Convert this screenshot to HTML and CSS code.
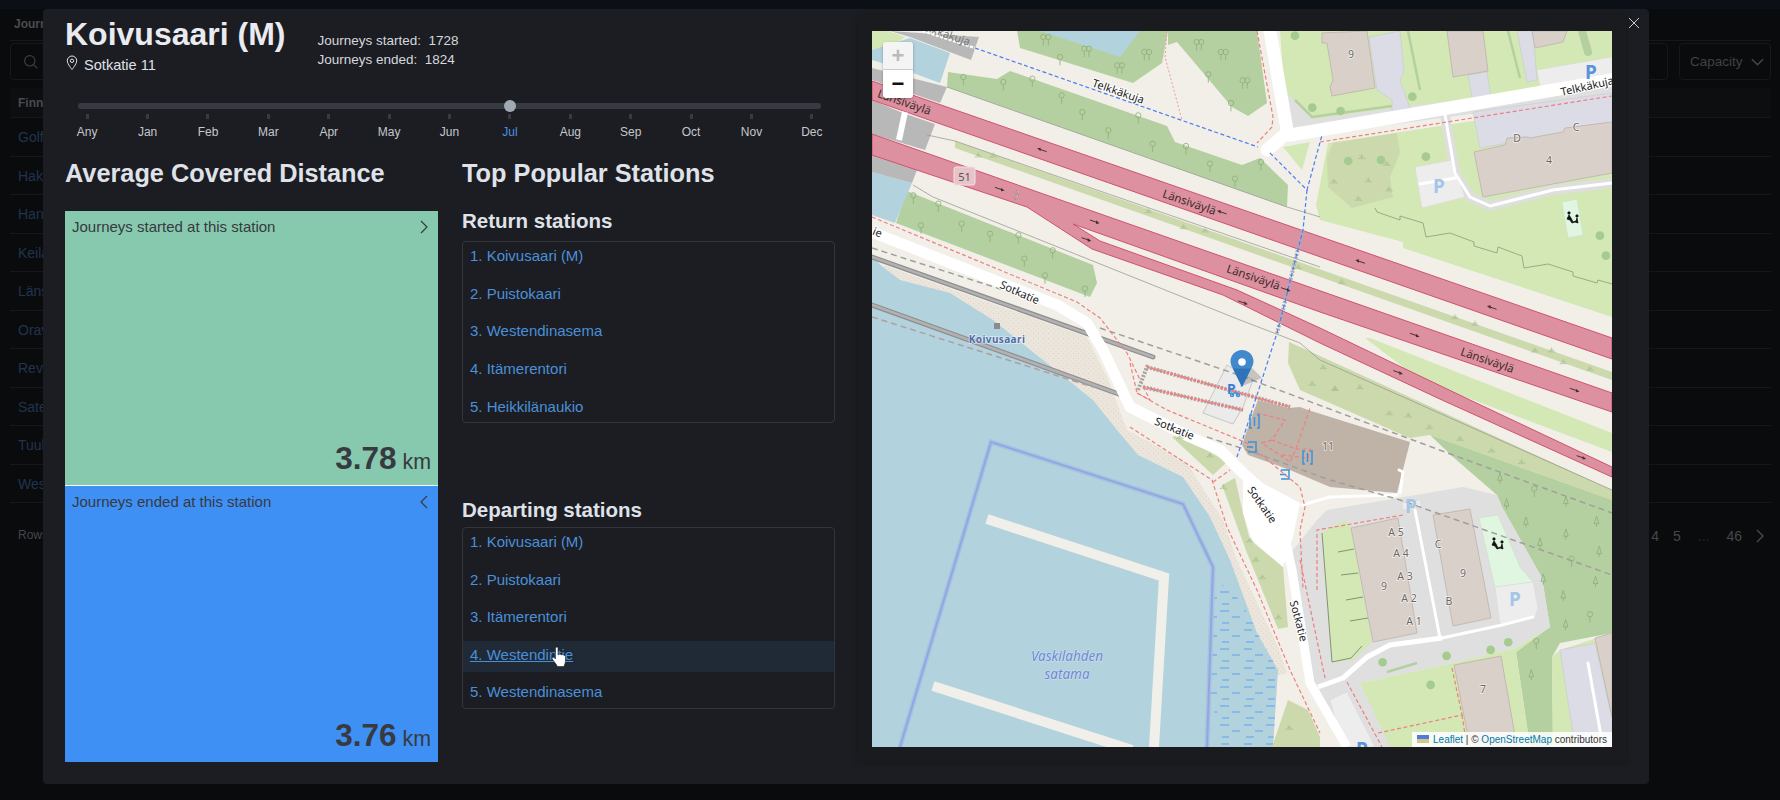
FILE: index.html
```html
<!DOCTYPE html>
<html lang="en">
<head>
  <meta charset="UTF-8">
  <title>Koivusaari (M)</title>
  <link rel="stylesheet" href="styles.css">
</head>
<body>

<div class="page">
  <div class="topbar"></div>
  <div class="page-title">Journeys</div>
  <div class="filters">
    <div class="search">
      <svg class="search-icon" viewBox="0 0 20 20"><circle cx="8.5" cy="8.5" r="6.5"/><path d="M13.5 13.5 18 18"/></svg>
    </div>
    <div class="select">Capacity
      <svg class="select-arrow" viewBox="0 0 14 8"><path d="M1 1l6 6 6-6"/></svg>
    </div>
  </div>
  <div class="table">
    <div class="row head">Finnish name</div>
    <div class="row link">Golfpolku</div>
    <div class="row link">Hakalehto</div>
    <div class="row link">Hanasaari</div>
    <div class="row link">Keilaranta</div>
    <div class="row link">Länsituuli</div>
    <div class="row link">Oravannahkatori</div>
    <div class="row link">Revontulentie</div>
    <div class="row link">Sateentie</div>
    <div class="row link">Tuulimäki</div>
    <div class="row link">Westendinasema</div>
  </div>
  <div class="pager">
    <span>Rows per page</span>
    <span class="pages"><span>4</span><span>5</span><span class="dots">...</span><span>46</span>
      <svg class="pager-next" viewBox="0 0 8 14"><path d="M1 1l6 6-6 6"/></svg>
    </span>
  </div>
</div>

<div class="modal">
  <button class="close" type="button" aria-label="Close">
    <svg viewBox="0 0 12 12"><path d="M1 1l10 10M11 1 1 11"/></svg>
  </button>

  <div class="info">
    <div class="head-row">
      <div>
        <h1>Koivusaari (M)</h1>
        <div class="address">
          <svg class="pin" viewBox="0 0 12 16"><path d="M6 1a4.7 4.7 0 0 0-4.7 4.8C1.3 9 6 14.5 6 14.5S10.7 9 10.7 5.8A4.7 4.7 0 0 0 6 1z"/><circle cx="6" cy="5.8" r="1.7"/></svg>
          Sotkatie 11
        </div>
      </div>
      <div class="counts">
        <div>Journeys started:&nbsp; 1728</div>
        <div>Journeys ended:&nbsp; 1824</div>
      </div>
    </div>

    <div class="slider">
      <div class="track"><div class="thumb"></div></div>
      <div class="marks">
        <span>Any</span><span>Jan</span><span>Feb</span><span>Mar</span><span>Apr</span><span>May</span><span>Jun</span>
        <span class="on">Jul</span><span>Aug</span><span>Sep</span><span>Oct</span><span>Nov</span><span>Dec</span>
      </div>
    </div>

    <div class="columns">
      <section class="col">
        <h2>Average Covered Distance</h2>
        <div class="treemap">
          <div class="cell green">
            <div class="cell-top">Journeys started at this station
              <svg class="chev" viewBox="0 0 8 14"><path d="M1 1l6 6-6 6"/></svg>
            </div>
            <div class="value"><b>3.78</b> km</div>
          </div>
          <div class="cell blue">
            <div class="cell-top">Journeys ended at this station
              <svg class="chev" viewBox="0 0 8 14"><path d="M7 1 1 7l6 6"/></svg>
            </div>
            <div class="value"><b>3.76</b> km</div>
          </div>
        </div>
      </section>

      <section class="col">
        <h2>Top Popular Stations</h2>
        <h3>Return stations</h3>
        <ul class="stations">
          <li><a>1. Koivusaari (M)</a></li>
          <li><a>2. Puistokaari</a></li>
          <li><a>3. Westendinasema</a></li>
          <li><a>4. Itämerentori</a></li>
          <li><a>5. Heikkilänaukio</a></li>
        </ul>
        <h3 class="second">Departing stations</h3>
        <ul class="stations tight">
          <li><a>1. Koivusaari (M)</a></li>
          <li><a>2. Puistokaari</a></li>
          <li><a>3. Itämerentori</a></li>
          <li class="hover"><a>4. Westendintie</a>
            <svg class="hand" viewBox="0 0 16 22"><path d="M5 1.5c.8-.8 2-.3 2 .8v6.500l1-.2c.2-.9 1.800-.9 2 .2l1 .1c.3-.7 1.700-.6 1.800.4l.7.2c.7 0 1 .8 1 1.500v4c0 2-1 3.500-1.500 5.500H6.500C5.500 18.500 3 15.500 1.300 13c-.7-1.300.8-2.300 1.700-1.500l1.500 1.500V2.500c0-.4.2-.8.5-1z"/></svg>
          </li>
          <li><a>5. Westendinasema</a></li>
        </ul>
      </section>
    </div>
  </div>

  <div class="map-card">
    <div class="map">
      <svg class="map-svg" viewBox="872 31 740 716">
        <defs>
          <g id="tree"><circle cy="-9" r="8"/><path d="M0-1V16"/></g>
          <g id="pine"><path d="M0-16-7 6H7zM0 6V16"/></g>
          <g id="tuft"><path d="M0-8V6M-9 6 0-2 9 6M-6-3 0 3 6-3M-11 6H11"/></g>
          <g id="arrow"><path d="M-15-5 8 3"/><path class="m-head" d="M14 5 3-4 3 7z"/></g>
          <pattern id="reeds" width="46" height="19" patternUnits="userSpaceOnUse">
            <path d="M2 3h8M24 3h9M13 9h8M36 9h8M4 15h8M26 15h7"/>
          </pattern>
          <pattern id="sand" width="5" height="5" patternUnits="userSpaceOnUse">
            <circle cx="1" cy="1" r=".45"/><circle cx="3.5" cy="3.5" r=".45"/>
          </pattern>
        </defs>

        <rect class="m-land" x="872" y="31" width="740" height="716"/>

        <!-- north side greens -->
        <polygon class="m-grass" points="872,31 888,31 905,37 872,60"/>
        <polygon class="m-grass" points="1280,31 1612,31 1612,85 1287,128"/>
        <polygon class="m-lot" points="1285,90 1312,119 1612,79 1612,95 1300,137 1284,130"/>
        <polygon class="m-grass" points="1328,143 1612,100 1612,317 1403,248 1403,242 1320,220 1316,205"/>
        <polygon class="m-grass" points="1283,147 1310,142 1302,170"/>
        <polygon class="m-scrub" points="1327,157 1333,143 1397,133 1400,153 1390,177 1393,197 1352,208 1328,187"/>
        <polygon class="m-forest" points="1017,31 1020,48 1133,83 1162,63 1168,31"/>
        <polygon class="m-forest" points="1168,45 1177,42 1232,107 1248,116 1267,103 1257,31 1168,31"/>
        <polygon class="m-water" points="1040,31 1120,57 1140,31"/>
        <polygon class="m-forest" points="948,72 997,79 1010,71 1167,126 1175,142 1242,165 1260,158 1288,185 1287,207 947,87"/>
        <polygon class="m-forest" points="907,191 1093,265 1097,283 1090,297 896,223"/>
        <polygon class="m-scrub" points="955,141 1612,372 1612,380 955,148"/>
        <polygon class="m-scrub" points="1289,342 1307,350 1612,490 1612,500 1430,435 1410,438 1300,390 1288,363"/>
        <polygon class="m-grass" points="1365,338 1370,338 1612,433 1612,452 1420,380"/>
        <polygon class="m-forest" points="1430,435 1612,500 1612,633 1560,643 1552,657 1553,747 1530,747 1516,652 1550,627 1542,578 1502,507 1497,495 1453,457"/>

        <!-- water, shore -->
        <polygon class="m-water" points="910,38 950,53 940,83 905,70 872,60 872,50"/>
        <polygon class="m-water" points="872,172 912,183 895,223 872,215"/>
        <polygon class="m-beach" points="883,265 1087,337 1107,377 1127,430 1187,463 1223,520 1237,560 1278,647 1287,673 1260,680 900,420"/>
        <polygon class="m-sand" points="883,265 1087,337 1107,377 1127,430 1187,463 1223,520 1237,560 1278,647 1287,673 1260,680 900,420"/>
        <polygon class="m-water" points="872,257 883,267 900,280 950,293 993,320 1043,360 1093,400 1117,430 1138,455 1183,477 1210,517 1230,560 1257,633 1278,670 1273,747 872,747"/>
        <polygon class="m-reeds" points="1217,580 1240,600 1278,670 1273,747 1222,747 1210,690 1212,600"/>
        <polyline class="m-pier" points="987,519 1164,577 1154,747"/>
        <polyline class="m-pier" points="933,686 1132,750"/>
        <polyline class="m-harbor-w" points="900,747 991,442 1183,504 1213,567 1207,747"/>
        <polyline class="m-harbor" points="900,747 991,442 1183,504 1213,567 1207,747"/>

        <!-- bridges -->
        <polygon class="m-gray" points="890,31 979,37 971,60 910,37"/>
        <polygon class="m-gray" points="872,68 947,87 940,103 872,80"/>
        <polygon class="m-gray" points="872,100 903,113 935,124 925,150 872,134"/>
        <polygon class="m-gray" points="872,155 917,170 912,183 872,172"/>
        <polyline class="m-deck" points="923,31 975,48"/>
        <text class="m-t-faint" transform="translate(943 37) rotate(19)">Telkkäkuja</text>

        <!-- motorway -->
        <polygon class="m-motorway" points="872,81 1612,338 1612,359 872,100"/>
        <polygon class="m-motorway" points="872,134 1612,393 1612,412 1320,312 1073,224 1100,241 1237,290 1320,328 1470,400 1612,467 1612,477 1442,400 1320,343 1223,295 1092,249 1027,207 872,155"/>
        <polyline class="m-bridge" points="905,112 899,140"/>
        <rect class="m-shield" x="954" y="167" width="21" height="18" rx="2"/>
        <text class="m-t-shield" x="964.5" y="181">51</text>
        <text class="m-t-ref" x="1016" y="199">3</text>

        <!-- thin walls -->
        <polyline class="m-wall" points="947,87 1287,207 1307,213 1320,217"/>
        <polyline class="m-wall" points="927,135 955,141 1320,267"/>
        <polyline class="m-wall" points="913,185 933,197 1240,320 1300,343 1320,360 1612,490"/>
        <polyline class="m-fence" points="1375,208 1377,212 1400,220 1400,216 1423,223 1426,237 1450,233 1474,242 1474,246 1497,253 1498,247 1522,256 1524,268 1548,264 1573,272 1573,276 1597,283 1598,280 1612,284"/>

        <!-- railway -->
        <polyline class="m-rail-b" points="872,257 1153,357"/>
        <polyline class="m-rail" points="872,257 1153,357"/>
        <polyline class="m-rail-b" points="872,305 1127,397"/>
        <polyline class="m-rail" points="872,305 1127,397"/>
        <polyline class="m-tunnel" points="872,248 1060,308"/>
        <polyline class="m-tunnel-r" points="872,317 1093,387"/>

        <!-- north buildings -->
        <polygon class="m-purple" points="1369,37 1400,31 1404,72 1400,80 1410,108 1392,112 1392,100 1377,90 1375,77"/>
        <polygon class="m-purple" points="1468,75 1487,72 1491,98 1473,102"/>
        <polygon class="m-purple" points="1517,31 1533,31 1537,80 1527,82"/>
        <polygon class="m-purple" points="1473,112 1612,93 1612,125 1480,148"/>
        <polygon class="m-building" points="1322,33 1367,31 1375,88 1332,96 1330,87 1333,80 1327,43 1322,43"/>
        <polygon class="m-building" points="1447,31 1483,31 1488,71 1453,77"/>
        <polygon class="m-building" points="1532,31 1567,31 1563,42 1535,48"/>
        <polygon class="m-parking" points="1537,70 1612,57 1612,78 1540,87"/>
        <polygon class="m-building" points="1474,152 1505,145 1507,138 1528,137 1530,138 1563,132 1565,128 1588,125 1612,122 1612,173 1483,197"/>
        <path class="m-strip" d="M1408 31 1420 90M1508 31 1520 78"/>
        <path class="m-strip-w" d="M1582 31 1588 52"/>
        <path class="m-strip" d="M1295 100 1312 117 1392 106"/>

        <!-- south lot north of motorway -->
        <polyline class="m-road-casing" points="1445,115 1455,173 1470,197 1490,206 1553,190 1612,183"/>
        <polygon class="m-parking" points="1415,167 1452,160 1465,197 1422,208"/>
        <polyline class="m-road-s" points="1445,115 1455,173 1470,197 1490,206 1553,190 1612,183"/>
        <polyline class="m-road-s" points="1420,184 1455,178"/>
        <polygon class="m-play" points="1562,202 1577,199 1583,235 1568,238"/>

        <!-- south east quarter -->
        <polygon class="m-lot" points="1317,520 1327,510 1463,487 1497,495 1502,507 1542,578 1550,627 1516,648 1453,663 1360,683 1392,747 1353,747 1310,690 1296,600 1293,550"/>
        <polygon class="m-grass" points="1322,533 1345,520 1352,530 1372,642 1353,660 1332,662"/>
        <polygon class="m-grass" points="1360,683 1453,663 1516,648 1550,627 1516,652 1530,747 1390,747"/>
        <polygon class="m-grass" points="1560,650 1612,633 1612,747 1553,747 1552,657"/>
        <polygon class="m-purple" points="1560,650 1595,643 1612,717 1612,747 1575,747"/>
        <polygon class="m-building" points="1595,638 1612,633 1612,717"/>
        <polygon class="m-building" points="1351,528 1398,518 1417,633 1373,642"/>
        <polygon class="m-building" points="1433,515 1470,509 1491,618 1453,626"/>
        <polygon class="m-building" points="1454,665 1501,656 1517,747 1470,747"/>
        <polygon class="m-play" points="1479,518 1498,515 1520,567 1533,582 1495,587"/>
        <polygon class="m-parking" points="1495,587 1533,582 1538,608 1535,617 1500,624"/>
        <polygon class="m-parking" points="1330,700 1347,692 1375,747 1343,747"/>
        <polygon class="m-scrub" points="1288,700 1308,710 1320,737 1320,747 1272,747"/>
        <polyline class="m-thin" points="1322,533 1332,662 1351,658 1362,646"/>
        <path class="m-thin" d="M1338 552 1354 549M1341 575 1358 573M1346 600 1363 597M1350 621 1368 618"/>
        <path class="m-strip" d="M1387 672 1417 663M1432 740 1434 747"/>
        <polygon class="m-scrub" points="1172,437 1180,435 1227,462 1213,475"/>
        <polygon class="m-scrub" points="1222,485 1235,478 1243,513 1250,540 1283,567 1288,627 1278,629 1247,553"/>

        <!-- roads -->
        <polygon class="m-white" points="1243,473 1270,487 1300,503 1293,537 1283,567 1252,540 1243,513"/>
        <polyline class="m-road" points="872,232 1057,305 1087,323 1103,350 1130,407 1190,437 1220,450 1243,473 1277,503"/>
        <polyline class="m-road-m" points="1283,530 1292,570 1310,683 1347,747"/>
        <polyline class="m-road-big" points="1270,31 1287,130"/>
        <polyline class="m-road-big" points="1290,135 1320,130 1612,80"/>
        <polyline class="m-road-big" points="1287,133 1267,150"/>
        <polyline class="m-road-s" points="1302,505 1330,497 1397,495"/>
        <polyline class="m-road-t" points="1318,687 1343,678 1367,657 1390,645 1442,638"/>
        <polyline class="m-road-s" points="1442,638 1502,625 1533,617"/>
        <polyline class="m-road-s" points="1415,510 1440,638"/>
        <polyline class="m-road-s" points="1588,663 1603,747"/>
        <polygon class="m-parking" points="1402,503 1420,500 1421,506 1403,510"/>

        <!-- dark building -->
        <polygon class="m-parking-e" points="1227,365 1253,380 1243,407 1233,424 1203,413"/>
        <polygon class="m-dark" points="1258,400 1288,408 1300,407 1308,410 1410,442 1397,493 1330,487 1290,470 1248,455 1242,445 1253,413"/>
        <polyline class="m-road-s" points="1400,493 1403,472 1399,470"/>
        <polyline class="m-tunnel" points="1100,328 1233,373 1453,455 1612,513"/>
        <polyline class="m-tunnel" points="1207,437 1247,450 1330,480 1400,500 1612,575"/>

        <!-- footways -->
        <polyline class="m-foot" points="872,217 1077,302 1100,318 1127,353 1150,400 1137,393"/>
        <polyline class="m-dotred" points="1167,31 1165,57 1182,120"/>
        <polyline class="m-foot" points="1257,31 1273,117 1272,127 1257,143"/>
        <polyline class="m-foot" points="1320,142 1612,96"/>
        <polyline class="m-foot-g" points="1138,390 1147,367 1290,407"/>
        <polyline class="m-foot-g" points="1143,387 1243,410"/>
        <polyline class="m-foot-t" points="1147,367 1290,407"/>
        <polyline class="m-foot-t" points="1143,387 1243,410"/>
        <polyline class="m-foot" points="1130,427 1212,480 1227,527 1257,590 1290,670 1320,733"/>
        <polyline class="m-foot" points="1130,363 1137,393 1167,410 1247,443 1300,487 1305,507 1300,530 1303,590"/>
        <polyline class="m-foot" points="1213,482 1230,470"/>
        <polyline class="m-foot" points="1300,560 1325,678"/>
        <polyline class="m-foot" points="1317,590 1317,530 1403,515"/>
        <polyline class="m-foot" points="1347,682 1382,747"/>
        <polyline class="m-foot" points="1378,733 1462,715 1452,668"/>
        <polyline class="m-foot" points="1462,715 1467,747"/>
        <polyline class="m-foot" points="1257,413 1285,420 1272,440 1296,449 1310,408"/>
        <polyline class="m-foot" points="1272,440 1262,443 1290,462 1296,449 1310,449 1308,458 1282,455"/>

        <!-- cycleways -->
        <polyline class="m-ladder" points="1303,230 1297,253 1283,310 1277,333"/>
        <polyline class="m-cycle" points="975,48 1258,147"/>
        <polyline class="m-cycle" points="1270,153 1307,190 1322,135"/>
        <polyline class="m-cycle" points="1307,190 1303,230 1297,253 1283,310 1277,333 1237,457"/>

        <!-- small marks, in thirds of a pixel -->
        <g transform="translate(860 0) scale(.3333)">
          <g class="m-trees">
            <use href="#tree" x="310" y="240"/><use href="#tree" x="430" y="255"/><use href="#tree" x="517" y="245"/><use href="#tree" x="605" y="295"/>
            <use href="#tree" x="667" y="345"/><use href="#tree" x="745" y="400"/><use href="#tree" x="835" y="355"/><use href="#tree" x="978" y="447"/>
            <use href="#tree" x="878" y="440"/><use href="#tree" x="1050" y="500"/><use href="#tree" x="1125" y="545"/><use href="#tree" x="1203" y="495"/>
            <use href="#tree" x="160" y="595"/><use href="#tree" x="235" y="620"/><use href="#tree" x="305" y="680"/><use href="#tree" x="390" y="710"/>
            <use href="#tree" x="475" y="715"/><use href="#tree" x="493" y="785"/><use href="#tree" x="578" y="760"/><use href="#tree" x="675" y="875"/>
            <use href="#tree" x="183" y="685"/><use href="#tree" x="555" y="835"/>
            <use href="#tree" x="550" y="120"/><use href="#tree" x="565" y="120"/><use href="#tree" x="673" y="155"/><use href="#tree" x="687" y="155"/>
            <use href="#tree" x="600" y="180"/><use href="#tree" x="772" y="205"/><use href="#tree" x="786" y="205"/><use href="#tree" x="853" y="165"/><use href="#tree" x="867" y="165"/>
            <use href="#tree" x="1010" y="135"/><use href="#tree" x="1024" y="135"/><use href="#tree" x="1083" y="165"/><use href="#tree" x="1097" y="165"/>
            <use href="#tree" x="1148" y="250"/><use href="#tree" x="1162" y="250"/><use href="#tree" x="1045" y="232"/><use href="#tree" x="1113" y="318"/>
            <use href="#pine" x="1920" y="1435"/><use href="#tree" x="2023" y="1475"/><use href="#pine" x="1940" y="1512"/><use href="#pine" x="2118" y="1505"/>
            <use href="#pine" x="1998" y="1567"/><use href="#pine" x="2210" y="1565"/><use href="#pine" x="2118" y="1603"/><use href="#pine" x="2040" y="1630"/>
            <use href="#tree" x="2135" y="1685"/><use href="#pine" x="2218" y="1655"/><use href="#pine" x="2050" y="1738"/><use href="#pine" x="2207" y="1745"/>
            <use href="#pine" x="2110" y="1788"/><use href="#tree" x="2190" y="1852"/><use href="#pine" x="2117" y="1875"/><use href="#tree" x="2029" y="1932"/><use href="#pine" x="2014" y="2025"/>
          </g>
          <g class="m-tufts">
            <use href="#tuft" x="1505" y="470"/><use href="#tuft" x="1580" y="490"/><use href="#tuft" x="1422" y="543"/><use href="#tuft" x="1525" y="540"/><use href="#tuft" x="1587" y="567"/><use href="#tuft" x="1495" y="595"/>
            <use href="#tuft" x="1588" y="1238"/><use href="#tuft" x="1645" y="1245"/><use href="#tuft" x="1708" y="1280"/><use href="#tuft" x="1800" y="1315"/><use href="#tuft" x="1895" y="1350"/><use href="#tuft" x="1985" y="1385"/>
            <use href="#tuft" x="1357" y="1150"/><use href="#tuft" x="1425" y="1165"/><use href="#tuft" x="1500" y="1160"/>
            <use href="#tuft" x="960" y="1310"/><use href="#tuft" x="1050" y="1365"/><use href="#tuft" x="1090" y="1460"/><use href="#tuft" x="1170" y="1620"/><use href="#tuft" x="1188" y="1678"/><use href="#tuft" x="1207" y="1730"/><use href="#tuft" x="1255" y="1850"/><use href="#tuft" x="1288" y="2182"/>
            <use href="#tuft" x="355" y="465"/><use href="#tuft" x="400" y="465"/><use href="#tuft" x="865" y="632"/><use href="#tuft" x="970" y="680"/><use href="#tuft" x="1035" y="690"/><use href="#tuft" x="1315" y="800"/>
            <use href="#tuft" x="1445" y="845"/><use href="#tuft" x="1785" y="950"/><use href="#tuft" x="1845" y="970"/><use href="#tuft" x="2025" y="1050"/><use href="#tuft" x="2075" y="1050"/><use href="#tuft" x="2110" y="1085"/><use href="#tuft" x="2190" y="1105"/>
            <use href="#tuft" x="1390" y="1100"/><use href="#tuft" x="1425" y="1165"/>
          </g>
          <g class="m-dots">
            <circle cx="1305" cy="107" r="13"/><circle cx="1357" cy="323" r="13"/><circle cx="1442" cy="333" r="13"/><circle cx="1657" cy="290" r="13"/>
            <circle cx="1698" cy="470" r="13"/><circle cx="1465" cy="483" r="13"/><circle cx="1563" cy="480" r="13"/><circle cx="2220" cy="707" r="13"/><circle cx="2238" cy="767" r="13"/>
            <circle cx="1568" cy="1987" r="13"/><circle cx="1760" cy="1968" r="13"/><circle cx="1892" cy="1950" r="13"/><circle cx="1945" cy="1927" r="13"/><circle cx="1712" cy="2055" r="13"/>
          </g>
          <g class="m-arrows">
            <use href="#arrow" transform="translate(545 450) rotate(180)"/><use href="#arrow" transform="translate(1085 637) rotate(180)"/>
            <use href="#arrow" transform="translate(1500 785) rotate(180)"/><use href="#arrow" transform="translate(1895 923) rotate(180)"/>
            <use href="#arrow" x="420" y="567"/><use href="#arrow" x="705" y="665"/><use href="#arrow" x="680" y="718"/>
            <use href="#arrow" x="1278" y="868"/><use href="#arrow" x="1150" y="908"/><use href="#arrow" x="1665" y="1005"/>
            <use href="#arrow" x="1615" y="1117"/><use href="#arrow" x="2145" y="1170"/><use href="#arrow" x="2165" y="1372"/>
          </g>
        </g>

        <!-- poi icons -->
        <g class="m-poi">
          <path d="M1252 415h-2v13h2M1257 415h2v13h-2M1254.5 417v9"/>
          <path d="M1305 451h-2v13h2M1310 451h2v13h-2M1307.5 453v9"/>
          <path d="M1248 442h8v10h-8M1247 447h6"/>
          <path d="M1281 470h8v9h-8M1280 474.5h6"/>
        </g>
        <text class="m-t-poi" x="1227" y="394">P</text>
        <g class="m-poi"><circle cx="1232" cy="395" r="1.5"/><circle cx="1238" cy="395" r="1.5"/><path d="M1232 395l3-3 3 3"/></g>

        <!-- playground figures -->
        <g class="m-fig">
          <circle cx="1569" cy="213" r="1.2"/><circle cx="1577" cy="216" r="1.2"/><path d="M1567 219l2-4 2 3 2 4 3-1 1-3 1 5-3-1-3 1-2-3z"/>
          <circle cx="1494" cy="539" r="1.2"/><circle cx="1502" cy="542" r="1.2"/><path d="M1492 545l2-4 2 3 2 4 3-1 1-3 1 5-3-1-3 1-2-3z"/>
        </g>

        <!-- labels -->
        <text class="m-t-road" transform="translate(903 106) rotate(19)">Länsiväylä</text>
        <text class="m-t-road" transform="translate(1188 206) rotate(19)">Länsiväylä</text>
        <text class="m-t-road" transform="translate(1252 281) rotate(19)">Länsiväylä</text>
        <text class="m-t-road" transform="translate(1486 364) rotate(19)">Länsiväylä</text>
        <text class="m-t-way" transform="translate(1117 95) rotate(19)">Telkkäkuja</text>
        <text class="m-t-way" transform="translate(1588 90) rotate(-13)">Telkkäkuja</text>
        <text class="m-t-way" transform="translate(1018 296) rotate(24)">Sotkatie</text>
        <text class="m-t-way" transform="translate(1173 432) rotate(22)">Sotkatie</text>
        <text class="m-t-way" transform="translate(1259 507) rotate(55)">Sotkatie</text>
        <text class="m-t-way" transform="translate(1295 622) rotate(75)">Sotkatie</text>
        <text class="m-t-way" transform="translate(876 236) rotate(22)">ie</text>
        <rect class="m-stop" x="994" y="323" width="6" height="6"/>
        <text class="m-t-stop" x="997" y="343">Koivusaari</text>
        <text class="m-t-bay" x="1067" y="661">Vaskilahden</text>
        <text class="m-t-bay" x="1067" y="679">satama</text>
        <text class="m-t-num" x="1351" y="58">9</text>
        <text class="m-t-num" x="1549" y="164">4</text>
        <text class="m-t-num" x="1517" y="142">D</text>
        <text class="m-t-num" x="1576" y="131">C</text>
        <text class="m-t-num" x="1328" y="450">11</text>
        <text class="m-t-num" x="1396" y="536">A 5</text>
        <text class="m-t-num" x="1401" y="557">A 4</text>
        <text class="m-t-num" x="1405" y="580">A 3</text>
        <text class="m-t-num" x="1409" y="602">A 2</text>
        <text class="m-t-num" x="1414" y="625">A 1</text>
        <text class="m-t-num" x="1384" y="590">9</text>
        <text class="m-t-num" x="1438" y="548">C</text>
        <text class="m-t-num" x="1463" y="577">9</text>
        <text class="m-t-num" x="1449" y="605">B</text>
        <text class="m-t-num" x="1483" y="693">7</text>
        <text class="m-t-p strong" x="1591" y="79">P</text>
        <text class="m-t-p" x="1439" y="193">P</text>
        <text class="m-t-p" x="1515" y="606">P</text>
        <text class="m-t-p" x="1411" y="513">P</text>
        <text class="m-t-p strong" x="1362" y="756">P</text>

        <!-- marker -->
        <polygon class="m-marker-shadow" points="1240,387 1248,364 1262,378"/>
        <path class="m-marker" d="M1242 350c-6.400 0-11.500 5-11.500 11.300 0 2.500 1 5 2.300 7.300l9.200 18.400 9.200-18.400c1.300-2.300 2.300-4.800 2.300-7.300 0-6.300-5.100-11.300-11.500-11.300z"/>
        <path class="m-marker-low" d="M1233 368.400h18l-9 18.600z"/>
        <circle class="m-marker-eye" cx="1242" cy="362" r="3.800"/>
      </svg>

      <div class="zoom-ctl">
        <span class="zoom-btn off">+</span>
        <span class="zoom-btn">−</span>
      </div>
      <div class="attrib">
        <svg class="flag" viewBox="0 0 12 8"><rect width="12" height="4" fill="#4C7BE1"/><rect y="4" width="12" height="4" fill="#D4C785"/></svg>
        <a>Leaflet</a> | © <a>OpenStreetMap</a> contributors
      </div>
    </div>
  </div>
</div>

</body>
</html>
```

FILE: styles.css
```css
* {
  box-sizing: border-box;
}
html, body {
  margin: 0;
  height: 100%;
}
body {
  width: 1780px;
  height: 800px;
  overflow: hidden;
  background: #060607;
  font-family: "Liberation Sans", Arial, sans-serif;
  position: relative;
}

/* dimmed page behind the modal */
.page {
  height: 800px;
  padding: 9px 9px 0 10px;
  background: #0a0b0d;
}
.topbar {
  position: absolute;
  left: 0;
  top: 0;
  width: 100%;
  height: 9px;
  background: #0c1016;
}
.page-title {
  height: 32px;
  padding: 8px 0 0 4px;
  font-size: 12px;
  font-weight: 700;
  color: #4a4c52;
  border-bottom: 1px solid #17181b;
}
.filters {
  display: flex;
  justify-content: space-between;
  margin-top: 2px;
  height: 37px;
}
.search {
  width: 1658px;
  border: 1px solid #17181b;
  border-radius: 4px;
  padding: 10px 0 0 12px;
}
.search-icon {
  width: 16px;
  height: 16px;
  fill: none;
  stroke: #3c3e44;
  stroke-width: 1.5;
}
.select {
  width: 92px;
  border: 1px solid #17181b;
  border-radius: 4px;
  padding: 10px 0 0 10px;
  font-size: 13.5px;
  color: #3f4248;
  position: relative;
}
.select-arrow {
  position: absolute;
  right: 6px;
  top: 14px;
  width: 13px;
  height: 8px;
  fill: none;
  stroke: #45484e;
  stroke-width: 1.5;
}
.table {
  margin-top: 8px;
}
.row {
  height: 38.5px;
  padding: 11px 0 0 8px;
  font-size: 14px;
  border-bottom: 1px solid #16171a;
}
.row.head {
  height: 30px;
  padding-top: 8px;
  font-size: 12px;
  font-weight: 700;
  color: #484a50;
  background: #0d0e10;
}
.row.link {
  color: #20344e;
}
.pager {
  display: flex;
  justify-content: space-between;
  margin-top: 25px;
  padding-left: 8px;
  font-size: 12px;
  color: #44464c;
}
.pages {
  display: flex;
  gap: 14px;
  align-items: center;
  font-size: 14px;
  color: #45474d;
  padding-right: 7px;
}
.dots {
  margin: 0 3px;
  color: #26272b;
}
.pager-next {
  width: 8px;
  height: 14px;
  fill: none;
  stroke: #4a4c52;
  stroke-width: 1.3;
}

/* modal */
.modal {
  position: absolute;
  left: 43px;
  top: 9px;
  width: 1606px;
  height: 775px;
  padding: 6px 23px 0 22px;
  display: flex;
  background: #1c1d22;
  border-radius: 4px;
  color: #dee2e8;
}
.close {
  position: absolute;
  right: 9px;
  top: 8px;
  width: 12px;
  height: 12px;
  padding: 0;
  border: 0;
  background: none;
}
.close svg {
  display: block;
  stroke: #c9ccd2;
  stroke-width: 1;
}

.info {
  width: 770px;
  flex: none;
}
.head-row {
  display: flex;
  gap: 32px;
}
h1 {
  margin: 0;
  font-size: 32px;
  line-height: 38px;
  font-weight: 700;
  color: #e9ebf0;
}
.address {
  display: flex;
  align-items: center;
  gap: 6px;
  margin-top: 3px;
  font-size: 14.6px;
  line-height: 18px;
}
.pin {
  width: 12px;
  height: 16px;
  fill: none;
  stroke: #dee2e8;
  stroke-width: 1;
  margin: -4px 0 0 1px;
}
.counts {
  padding-top: 17px;
  font-size: 13.5px;
  line-height: 18.5px;
  color: #d5d8de;
}

.slider {
  margin: 29px 0 0 13px;
  width: 743px;
}
.track {
  height: 6px;
  background: #373a42;
  border-radius: 3px;
  position: relative;
}
.thumb {
  position: absolute;
  left: 58.1%;
  top: -3px;
  width: 12px;
  height: 12px;
  margin-left: -6px;
  border-radius: 50%;
  background: #a0aab2;
}
.marks {
  display: grid;
  grid-template-columns: repeat(13, 60.4px);
  margin: 5px 0 0 -21px;
  font-size: 12px;
  text-align: center;
  color: #c4c7cd;
}
.marks span::before {
  content: "";
  display: block;
  width: 3px;
  height: 5px;
  margin: 0 auto 6px;
  background: #373a42;
}
.marks .on {
  color: #4a90e2;
}

.columns {
  display: flex;
  gap: 24px;
  margin-top: 18.7px;
}
.col {
  width: 373px;
}
h2 {
  margin: 0;
  font-size: 25.3px;
  line-height: 30px;
  font-weight: 700;
  color: #dfe2e8;
}
h3 {
  margin: 21.5px 0 0;
  font-size: 20.5px;
  line-height: 23px;
  font-weight: 700;
  color: #dfe2e8;
}
h3.second {
  margin-top: 74.5px;
}

.treemap {
  margin-top: 23px;
  height: 551px;
  display: flex;
  flex-direction: column;
}
.cell {
  padding: 7.5px 7px 4px 7px;
  display: flex;
  flex-direction: column;
  justify-content: space-between;
  color: #373a40;
  font-size: 15px;
}
.cell.green {
  height: 275px;
  background: #86c9ae;
  border-bottom: 1.5px solid #f4f8f6;
}
.cell.blue {
  height: 276px;
  background: #3f90f5;
}
.cell-top {
  display: flex;
  justify-content: space-between;
  align-items: center;
  padding-right: 3px;
}
.chev {
  width: 8px;
  height: 14px;
  fill: none;
  stroke: #373a40;
  stroke-width: 1.2;
}
.value {
  text-align: right;
  font-size: 21.4px;
  line-height: 38px;
}
.value b {
  font-size: 31.5px;
}

.stations {
  list-style: none;
  margin: 9px 0 0;
  padding: 0;
  height: 182px;
  border: 1px solid #33353b;
  border-radius: 4px;
  overflow: hidden;
}
.stations.tight {
  margin-top: 6.4px;
}
.stations li {
  height: 31px;
  margin-bottom: 6.6px;
  padding: 0 7px;
  font-size: 15px;
  line-height: 28px;
  color: #4a90d9;
  position: relative;
}
.stations .hover {
  background: #1f2a36;
}
.stations .hover a {
  text-decoration: underline;
}
.hand {
  position: absolute;
  left: 88px;
  top: 5px;
  width: 16px;
  height: 22px;
  fill: #fff;
  stroke: #222;
  stroke-width: .6;
}

/* map */
.map-card {
  width: 769px;
  height: 747px;
  margin-left: 22px;
  padding: 16px 14px 15px 15px;
  background: #1a1b1f;
  border-radius: 4px;
  box-shadow: 0 1px 6px rgba(0, 0, 0, .25);
}
.map {
  width: 740px;
  height: 716px;
  position: relative;
  overflow: hidden;
}
.map-svg {
  display: block;
  width: 740px;
  height: 716px;
}
.zoom-ctl {
  position: absolute;
  left: 11px;
  top: 11px;
  width: 30px;
  display: flex;
  flex-direction: column;
  border-radius: 3px;
  overflow: hidden;
  box-shadow: 0 1px 3px rgba(0, 0, 0, .3);
}
.zoom-btn {
  height: 28px;
  background: #fff;
  color: #111;
  font-size: 22px;
  font-weight: 700;
  line-height: 28px;
  text-align: center;
}
.zoom-btn.off {
  background: #f4f4f4;
  color: #bbb;
  border-bottom: 1px solid #ccc;
}
.attrib {
  position: absolute;
  right: 0;
  bottom: 0;
  height: 15px;
  padding: 0 5px;
  font-size: 10px;
  line-height: 15px;
  color: #333;
  background: rgba(255, 255, 255, .85);
}
.attrib a {
  color: #0078a8;
}
.flag {
  width: 12px;
  height: 8px;
  margin-right: 1px;
}

/* map layers */
.m-land { fill: #f2efe9; }
.m-grass { fill: #d3e8b5; }
.m-forest { fill: #b5d0a0; }
.m-scrub { fill: #cbd9ac; }
.m-water { fill: #b2d2dd; }
.m-beach { fill: #ebe5dc; }
.m-sand { fill: url(#sand); }
#sand circle { fill: #c9bfb2; }
.m-reeds { fill: url(#reeds); }
#reeds path { stroke: #5ba2ee; stroke-width: 1; fill: none; }
.m-pier { fill: none; stroke: #f1efe9; stroke-width: 10; }
.m-harbor-w { fill: none; stroke: #a9c0e2; stroke-width: 5; }
.m-harbor { fill: none; stroke: #8fa9e0; stroke-width: 2; }
.m-gray { fill: #b8b8b8; }
.m-deck { fill: none; stroke: #fff; stroke-width: 2.5; stroke-dasharray: 3 1.5; }
.m-t-faint { font: 11px "Noto Sans", sans-serif; fill: #777; text-anchor: middle; }
.m-motorway { fill: #dd909f; stroke: #d0516e; stroke-width: 1; }
.m-bridge { fill: none; stroke: #fff; stroke-width: 6; }
.m-shield { fill: #e7c4c9; stroke: #efe0e0; }
.m-t-shield { font: 11px "Noto Sans", sans-serif; fill: #555; text-anchor: middle; }
.m-t-ref { font: italic 11px "Noto Sans", sans-serif; fill: #fff; stroke: #6a4a50; stroke-width: .3; text-anchor: middle; }
.m-wall { fill: none; stroke: #9a9d92; stroke-width: .8; }
.m-fence { fill: none; stroke: #8c9a7c; stroke-width: .8; }
.m-thin { fill: none; stroke: #6f7c5f; stroke-width: .8; }
.m-rail-b { fill: none; stroke: #8f8f8f; stroke-width: 5; stroke-linecap: round; }
.m-rail { fill: none; stroke: #b2b2b2; stroke-width: 2.5; stroke-linecap: round; }
.m-tunnel { fill: none; stroke: #9f9f9c; stroke-width: 1.5; stroke-dasharray: 6 4; }
.m-tunnel-r { fill: none; stroke: #b09e9c; stroke-width: 1.5; stroke-dasharray: 6 4; }
.m-purple { fill: #dcdce6; stroke: #c5c5ce; stroke-width: .5; }
.m-building { fill: #d9d0ca; stroke: #bdb2a9; stroke-width: .8; }
.m-dark { fill: #bfb2a7; }
.m-parking { fill: #ededed; stroke: #d8d8d8; stroke-width: .5; }
.m-parking-e { fill: #ebebeb; stroke: #bcbcbc; stroke-width: .8; }
.m-lot { fill: #dfdfdf; }
.m-play { fill: #e1f6e0; stroke: #c6dec4; stroke-width: .5; }
.m-strip { fill: none; stroke: #b5d0a0; stroke-width: 2.5; }
.m-strip-w { fill: none; stroke: #b5d0a0; stroke-width: 8; stroke-linecap: round; }
.m-white { fill: #fff; }
.m-road { fill: none; stroke: #fff; stroke-width: 11; stroke-linejoin: round; }
.m-road-m { fill: none; stroke: #fff; stroke-width: 9; stroke-linejoin: round; }
.m-road-big { fill: none; stroke: #fff; stroke-width: 13; stroke-linejoin: round; stroke-linecap: round; }
.m-road-t { fill: none; stroke: #fff; stroke-width: 5; stroke-linejoin: round; }
.m-road-s { fill: none; stroke: #fff; stroke-width: 3; stroke-linejoin: round; stroke-linecap: round; }
.m-road-casing { fill: none; stroke: #dedede; stroke-width: 10; stroke-linejoin: round; }
.m-foot { fill: none; stroke: #ee7f7f; stroke-width: 1.2; stroke-dasharray: 4 2.5; }
.m-foot-g { fill: none; stroke: #a9a6a2; stroke-width: 4; stroke-dasharray: 2 1.5; }
.m-foot-t { fill: none; stroke: #f27d7d; stroke-width: 2; stroke-dasharray: 3 1; }
.m-dotred { fill: none; stroke: #eb9c9c; stroke-width: 1; stroke-dasharray: 2 2; }
.m-ladder { fill: none; stroke: #a8aeb8; stroke-width: 4; stroke-dasharray: 2 1.5; }
.m-cycle { fill: none; stroke: #4c7cf0; stroke-width: 1.2; stroke-dasharray: 4 2.5; }
.m-trees use { fill: none; stroke: #8fad7c; stroke-width: 2.5; }
.m-tufts use { fill: none; stroke: #a6bd8e; stroke-width: 1.8; }
.m-dots circle { fill: #a6cb8f; }
.m-arrows use { fill: none; stroke: #4a3035; stroke-width: 3; }
.m-head { fill: #4a3035; stroke: none; }
.m-poi { fill: none; stroke: #3c92dc; stroke-width: 1.5; }
.m-t-poi { font: 700 14px "Noto Sans", sans-serif; fill: #3c7fd0; }
.m-fig { fill: #111; stroke: #111; stroke-width: .8; }
.m-t-road { font: 11.5px "Noto Sans", sans-serif; fill: #3b2b2e; text-anchor: middle; }
.m-t-way { font: 11px "Noto Sans", sans-serif; fill: #222; stroke: #fff; stroke-width: 2; paint-order: stroke; text-anchor: middle; }
.m-stop { fill: #8c8c8c; }
.m-t-stop { font: 700 10px "Noto Sans", sans-serif; fill: #4d6ca8; stroke: #fff; stroke-width: 1.5; stroke-opacity: .6; paint-order: stroke; text-anchor: middle; letter-spacing: .4px; }
.m-t-bay { font: italic 13.5px "Noto Sans", sans-serif; fill: #6f88d8; stroke: #fff; stroke-width: 1; stroke-opacity: .4; paint-order: stroke; text-anchor: middle; }
.m-t-num { font: 10.5px "Noto Sans", sans-serif; fill: #6b6662; stroke: #fff; stroke-width: 1.5; stroke-opacity: .7; paint-order: stroke; text-anchor: middle; }
.m-t-p { font: 700 19px "Noto Sans", sans-serif; fill: #a3c6e8; text-anchor: middle; }
.m-t-p.strong { fill: #5a92dc; }
.m-marker-shadow { fill: rgba(0, 0, 0, .18); }
.m-marker { fill: #4188cd; }
.m-marker-low { fill: #2f74b8; }
.m-marker-eye { fill: #fff; }
```
